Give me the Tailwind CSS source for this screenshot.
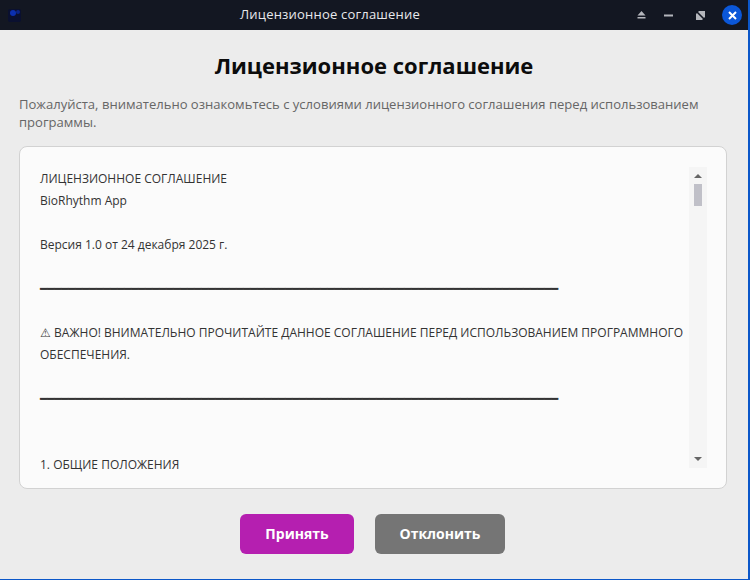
<!DOCTYPE html>
<html lang="ru">
<head>
  <meta charset="UTF-8">
  <title>Лицензионное соглашение</title>
  <script src="https://cdn.jsdelivr.net/npm/@tailwindcss/browser@4"></script>
</head>
<body class="w-[750px] h-[580px] overflow-hidden bg-[#ececec] font-['Open_Sans',sans-serif]">
  <div class="w-full h-full flex flex-col border-r-2 border-b border-[#0b57c9]">
    <!-- Title bar -->
    <div class="h-[30px] shrink-0 bg-[#131722] relative flex items-center justify-center pr-[88px]">
      <svg class="absolute left-[7px] top-[7px]" width="15" height="16" viewBox="0 0 15 16">
        <rect x="1" y="2" width="13" height="13" rx="2" fill="#0a1030"/>
        <circle cx="6" cy="6" r="3" fill="#0b2fb0"/>
        <circle cx="11" cy="5" r="2" fill="#0a2388"/>
      </svg>
      <span class="text-[13px] text-[#e8e9ec] tracking-[0.2px]">Лицензионное соглашение</span>
      <div class="absolute right-[6px] top-0 h-[30px] flex items-center">
        <svg class="mr-[18px]" width="9" height="10" viewBox="0 0 9 10"><path d="M4.5 1 8.5 5.5H.5Z M.5 7h8v1.5H.5Z" fill="#b4b6bc"/></svg>
        <svg class="mr-[23px]" width="9" height="3" viewBox="0 0 9 3"><rect width="9" height="2" y="0.5" fill="#b4b6bc"/></svg>
        <svg class="mr-[17px]" width="9" height="9" viewBox="0 0 9 9"><path d="M0 3 3 0H9V6L6 9H0Z" fill="#b4b6bc"/><path d="M1 1 8 8" stroke="#131722" stroke-width="1.6"/></svg>
        <div class="w-5 h-5 rounded-full bg-[#0b57d8] flex items-center justify-center">
          <svg width="9" height="9" viewBox="0 0 9 9"><path d="M1 1 8 8M8 1 1 8" stroke="#fff" stroke-width="2"/></svg>
        </div>
      </div>
    </div>

    <!-- Content -->
    <div class="flex-1 flex flex-col px-[19px] min-h-0">
      <h1 class="mt-[20px] text-center text-[22px] leading-[30px] font-bold text-[#0c0c0c]">Лицензионное соглашение</h1>
      <p class="mt-[15px] text-[13.06px] leading-[18px] text-[#666666]">Пожалуйста, внимательно ознакомьтесь с условиями лицензионного соглашения перед использованием программы.</p>

      <div class="mt-[15px] w-[708px] h-[343px] bg-[#fbfbfb] border border-[#d2d2d2] rounded-lg relative pl-5 pt-[21px] overflow-hidden">
        <div class="w-[650px] text-xs leading-[22px] text-[#333333]">
          <p>ЛИЦЕНЗИОННОЕ СОГЛАШЕНИЕ</p>
          <p>BioRhythm App</p>
          <p>&nbsp;</p>
          <p>Версия 1.0 от 24 декабря 2025 г.</p>
          <p>&nbsp;</p>
          <p>━━━━━━━━━━━━━━━━━━━━━━━━━━━━━━━━━━━━━━━━━━━━━━━━━━━━━━━━━━━━━━━━━━━━━━━━━━</p>
          <p>&nbsp;</p>
          <p>⚠ ВАЖНО! ВНИМАТЕЛЬНО ПРОЧИТАЙТЕ ДАННОЕ СОГЛАШЕНИЕ ПЕРЕД ИСПОЛЬЗОВАНИЕМ ПРОГРАММНОГО ОБЕСПЕЧЕНИЯ.</p>
          <p>&nbsp;</p>
          <p>━━━━━━━━━━━━━━━━━━━━━━━━━━━━━━━━━━━━━━━━━━━━━━━━━━━━━━━━━━━━━━━━━━━━━━━━━━</p>
          <p>&nbsp;</p>
          <p>&nbsp;</p>
          <p>1. ОБЩИЕ ПОЛОЖЕНИЯ</p>
        </div>
        <!-- Scrollbar -->
        <div class="absolute left-[669px] top-[20px] w-[18px] h-[301px] bg-[#f5f5f5] flex flex-col items-center">
          <div class="mt-[7px] w-0 h-0 border-x-[4px] border-x-transparent border-b-[4px] border-b-[#666666]"></div>
          <div class="mt-[6px] w-2 h-[22px] bg-[#c0c0c8]"></div>
          <div class="mt-auto mb-[7px] w-0 h-0 border-x-[4px] border-x-transparent border-t-[4px] border-t-[#666666]"></div>
        </div>
      </div>

      <div class="mt-[25px] flex justify-center gap-[21px] pr-[3px]">
        <button class="w-[114px] h-10 rounded-md bg-[#b51fb0] text-white text-sm font-bold">Принять</button>
        <button class="w-[130px] h-10 rounded-md bg-[#757575] text-white text-sm font-bold">Отклонить</button>
      </div>
    </div>
  </div>
</body>
</html>
